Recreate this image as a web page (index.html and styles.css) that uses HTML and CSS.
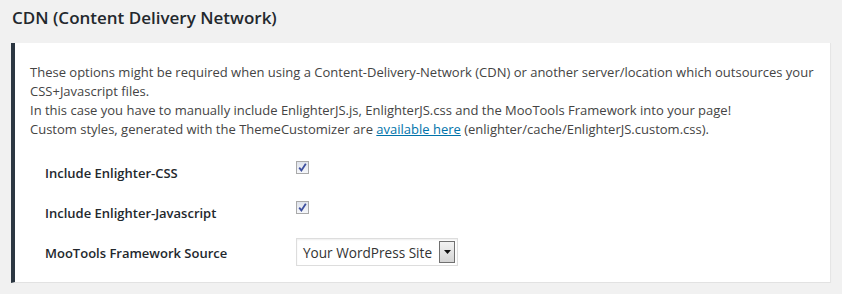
FILE: index.html
```html
<!DOCTYPE html>
<html lang="en">
<head>
    <meta charset="UTF-8" />
    <title>CDN | Enlighter Settings</title>
    <link rel="stylesheet" href="styles.css">
</head>
<body>

<h2 class="section-title">CDN (Content Delivery Network)</h2>

<div class="panel">
    <p class="intro">
        These options might be required when using a Content-Delivery-Network (CDN) or another server/location which outsources your CSS+Javascript files.<br>
        In this case you have to manually include EnlighterJS.js, EnlighterJS.css and the MooTools Framework into your page!<br>
        Custom styles, generated with the ThemeCustomizer are <a href="#">available here</a> (enlighter/cache/EnlighterJS.custom.css).
    </p>

    <div class="form-rows">
        <div class="row">
            <div class="label">Include Enlighter-CSS</div>
            <div class="control">
                <span class="checkbox">
                    <svg width="9" height="9" viewBox="0 0 9 9"><path d="M1.2 4.6 L3.4 7.4 L7.8 0.8" fill="none" stroke="#3d4f9f" stroke-width="1.8"/></svg>
                </span>
            </div>
        </div>
        <div class="row">
            <div class="label">Include Enlighter-Javascript</div>
            <div class="control">
                <span class="checkbox">
                    <svg width="9" height="9" viewBox="0 0 9 9"><path d="M1.2 4.6 L3.4 7.4 L7.8 0.8" fill="none" stroke="#3d4f9f" stroke-width="1.8"/></svg>
                </span>
            </div>
        </div>
        <div class="row">
            <div class="label">MooTools Framework Source</div>
            <div class="control">
                <div class="select">
                    <span class="select-text">Your WordPress Site</span>
                    <span class="select-btn">
                        <svg width="7" height="4" viewBox="0 0 7 4"><path d="M0 0 H7 L3.5 4 Z" fill="#111"/></svg>
                    </span>
                </div>
            </div>
        </div>
    </div>
</div>

</body>
</html>
```

FILE: styles.css
```css
body {
    font-family: "Open Sans", Arial, sans-serif;
    font-size: 13px;
    color: #444;
    background: #f1f1f1;
    margin: 0;
    padding: 0;
}
.section-title {
    font-size: 17px;
    font-weight: 600;
    color: #23282d;
    margin: 0;
    padding: 6px 0 0 12px;
    height: 37px;
    line-height: 24px;
}
.panel {
    margin-left: 11px;
    width: 800px;
    height: 239px;
    background: #fff;
    border-left: 4px solid #2c3742;
    border-right: 1px solid #e5e5e5;
    border-bottom: 1px solid #e2e2e2;
    box-shadow: 0 1px 1px rgba(0, 0, 0, 0.04);
    padding: 0 0 0 15px;
}
.intro {
    margin: 0;
    padding-top: 20px;
    line-height: 19px;
    width: 790px;
}
.intro a {
    color: #0073aa;
}
.form-rows {
    margin-top: 14px;
    padding-left: 15px;
}
.row {
    display: flex;
    height: 40px;
}
.label {
    width: 251px;
    font-weight: 600;
    color: #23282d;
    line-height: 20px;
    padding-top: 10px;
}
.control {
    padding-top: 8px;
}
.checkbox {
    display: flex;
    align-items: center;
    justify-content: center;
    width: 11px;
    height: 11px;
    border: 1px solid #a9a9a9;
    background: linear-gradient(#dfe3ec, #f6f7fa);
}
.select {
    display: flex;
    align-items: center;
    margin-top: -3px;
    width: 160px;
    height: 26px;
    border: 1px solid #ddd;
    box-shadow: inset 0 1px 2px rgba(0, 0, 0, 0.07);
    background: #fff;
}
.select-text {
    font-size: 13.6px;
    color: #333;
    padding-left: 6px;
    flex: 1;
}
.select-btn {
    display: flex;
    align-items: center;
    justify-content: center;
    width: 14px;
    height: 20px;
    margin-right: 2px;
    border: 1px solid #707070;
    background: linear-gradient(#f2f2f2, #d4d4d4);
}
```
